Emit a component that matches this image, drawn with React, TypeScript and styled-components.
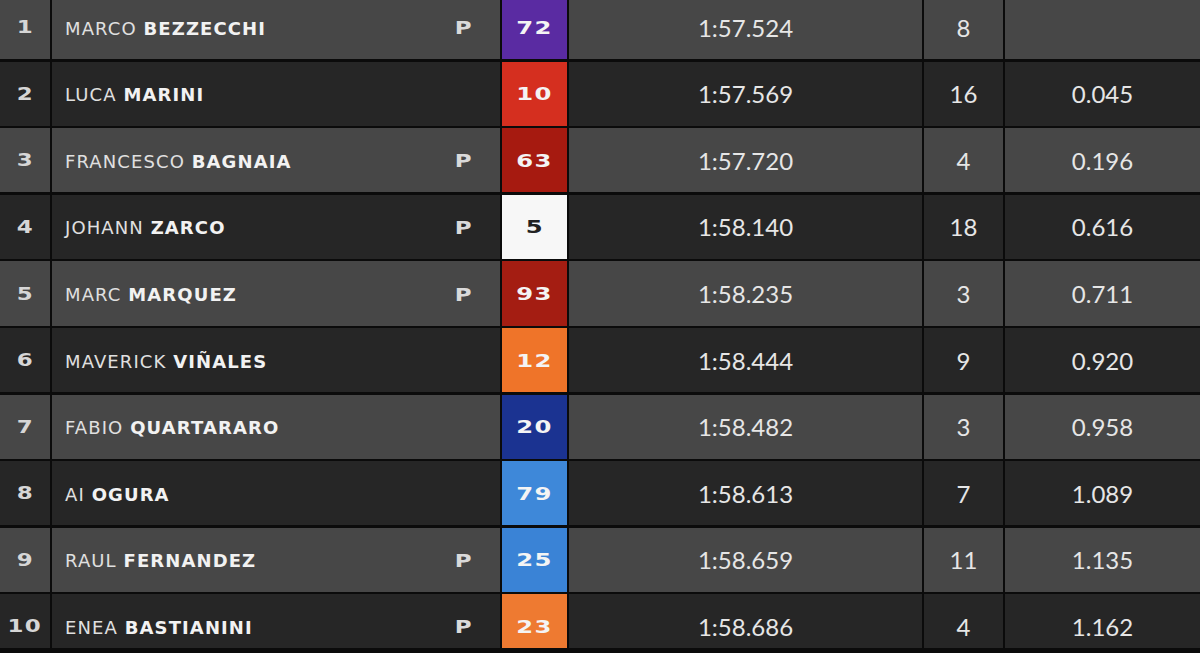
import React from 'react';
import styled, { createGlobalStyle } from 'styled-components';

type Rider = {
  pos: number;
  first: string;
  last: string;
  pole: boolean;
  num: string;
  color: string;
  dark?: boolean;
  time: string;
  laps: number;
  gap: string;
};

const riders: Rider[] = [
  { pos: 1, first: 'MARCO', last: 'BEZZECCHI', pole: true, num: '72', color: '#5a2ba2', time: '1:57.524', laps: 8, gap: '' },
  { pos: 2, first: 'LUCA', last: 'MARINI', pole: false, num: '10', color: '#d52f1f', time: '1:57.569', laps: 16, gap: '0.045' },
  { pos: 3, first: 'FRANCESCO', last: 'BAGNAIA', pole: true, num: '63', color: '#a61a10', time: '1:57.720', laps: 4, gap: '0.196' },
  { pos: 4, first: 'JOHANN', last: 'ZARCO', pole: true, num: '5', color: '#f7f7f7', dark: true, time: '1:58.140', laps: 18, gap: '0.616' },
  { pos: 5, first: 'MARC', last: 'MARQUEZ', pole: true, num: '93', color: '#a41d12', time: '1:58.235', laps: 3, gap: '0.711' },
  { pos: 6, first: 'MAVERICK', last: 'VIÑALES', pole: false, num: '12', color: '#ef7429', time: '1:58.444', laps: 9, gap: '0.920' },
  { pos: 7, first: 'FABIO', last: 'QUARTARARO', pole: false, num: '20', color: '#1b3391', time: '1:58.482', laps: 3, gap: '0.958' },
  { pos: 8, first: 'AI', last: 'OGURA', pole: false, num: '79', color: '#3e88d9', time: '1:58.613', laps: 7, gap: '1.089' },
  { pos: 9, first: 'RAUL', last: 'FERNANDEZ', pole: true, num: '25', color: '#3a83d6', time: '1:58.659', laps: 11, gap: '1.135' },
  { pos: 10, first: 'ENEA', last: 'BASTIANINI', pole: true, num: '23', color: '#ee7a31', time: '1:58.686', laps: 4, gap: '1.162' },
];

const GlobalStyle = createGlobalStyle`
  html, body {
    margin: 0;
    padding: 0;
    background: #0b0b0b;
    overflow: hidden;
  }
`;

const Table = styled.div`
  width: 1200px;
  height: 653px;
  overflow: hidden;
  background: #0b0b0b;
  display: flex;
  flex-direction: column;
  gap: 2.3px;
  margin-top: -5px;
`;

const Row = styled.div<{ $odd: boolean }>`
  height: 64.3px;
  flex-shrink: 0;
  display: grid;
  grid-template-columns: 50px 448px 65px 353px 79px 1fr;
  column-gap: 2px;
  --row-bg: ${(p) => (p.$odd ? '#474747' : '#262626')};
`;

const Cell = styled.div`
  background: var(--row-bg);
  display: flex;
  align-items: center;
  justify-content: center;
  color: #ececec;
`;

const PosCell = styled(Cell)`
  font-family: 'DejaVu Sans', sans-serif;
  font-size: 17px;
  font-weight: 600;
  color: #d6d6d6;
`;

const Wide = styled.span`
  display: inline-block;
  transform: scaleX(1.35);
  letter-spacing: 1px;
`;

const NameCell = styled(Cell)`
  justify-content: space-between;
  padding: 2px 30px 0 13px;
  font-family: 'DejaVu Sans', sans-serif;
  font-size: 18px;
  letter-spacing: 1.1px;
  color: #e0e0e0;
`;

const Last = styled.b`
  font-weight: 700;
  color: #f2f2f2;
`;

const Pole = styled.span`
  font-family: 'DejaVu Sans', sans-serif;
  font-size: 17px;
  font-weight: 600;
  color: #dadada;
`;

const NumCell = styled(Cell)<{ $bg: string; $dark?: boolean }>`
  background: ${(p) => p.$bg};
  color: ${(p) => (p.$dark ? '#222' : '#f4f4f4')};
  font-family: 'DejaVu Sans', sans-serif;
  font-weight: bold;
  font-size: 18px;
`;

const DataCell = styled(Cell)`
  font-family: Lato, sans-serif;
  font-size: 24px;
  color: #e6e6e6;
`;

export default function App() {
  return (
    <>
      <GlobalStyle />
      <Table>
        {riders.map((r) => (
          <Row key={r.pos} $odd={r.pos % 2 === 1}>
            <PosCell>
              <Wide>{r.pos}</Wide>
            </PosCell>
            <NameCell>
              <span>
                {r.first} <Last>{r.last}</Last>
              </span>
              {r.pole && (
                <Pole>
                  <Wide>P</Wide>
                </Pole>
              )}
            </NameCell>
            <NumCell $bg={r.color} $dark={r.dark}>
              <Wide>{r.num}</Wide>
            </NumCell>
            <DataCell>{r.time}</DataCell>
            <DataCell>{r.laps}</DataCell>
            <DataCell>{r.gap}</DataCell>
          </Row>
        ))}
      </Table>
    </>
  );
}
